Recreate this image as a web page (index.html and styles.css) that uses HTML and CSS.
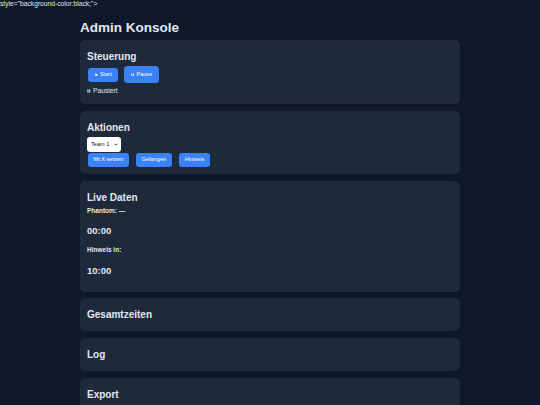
FILE: index.html
```html
<!DOCTYPE html>
<html lang="de">
<head>
<meta charset="utf-8">
<title>Admin Konsole</title>
<link rel="stylesheet" href="styles.css">
</head>
<body>
<div class="stray">style="background-color:black;"&gt;</div>
<main class="container">
  <h1 class="title">Admin Konsole</h1>

  <section class="card">
    <h2 class="card-title">Steuerung</h2>
    <div class="btn-row btn-row--controls">
      <button class="btn btn--start"><svg class="ico ico--play" viewBox="0 0 4 4"><path d="M0.3 0.2 L3.7 2 L0.3 3.8 Z" fill="#fff"/></svg>Start</button>
      <button class="btn btn--tall"><svg class="ico ico--pause" viewBox="0 0 4 4"><rect x="0.6" y="0.3" width="1" height="3.4" fill="#fff"/><rect x="2.4" y="0.3" width="1" height="3.4" fill="#fff"/></svg>Pause</button>
    </div>
    <p class="status"><svg class="ico ico--status" viewBox="0 0 4 4"><rect x="0.5" y="0.2" width="1.1" height="3.6" fill="#e2e8f0"/><rect x="2.4" y="0.2" width="1.1" height="3.6" fill="#e2e8f0"/></svg>Pausiert</p>
  </section>

  <section class="card">
    <h2 class="card-title">Aktionen</h2>
    <div class="select-wrap">
      <select class="select"><option>Team 1</option></select>
      <svg class="chevron" viewBox="0 0 6 4"><path d="M0.8 0.8 L3 3 L5.2 0.8" fill="none" stroke="#111" stroke-width="1.1"/></svg>
    </div>
    <div class="btn-row btn-row--actions">
      <button class="btn">Mr.X setzen</button>
      <button class="btn">Gefangen</button>
      <button class="btn">Hinweis</button>
    </div>
  </section>

  <section class="card">
    <h2 class="card-title">Live Daten</h2>
    <p class="live-label">Phantom: —</p>
    <p class="live-time">00:00</p>
    <p class="live-label">Hinweis in:</p>
    <p class="live-time live-time--last">10:00</p>
  </section>

  <section class="card">
    <h2 class="card-title">Gesamtzeiten</h2>
  </section>

  <section class="card">
    <h2 class="card-title">Log</h2>
  </section>

  <section class="card">
    <h2 class="card-title">Export</h2>
  </section>
</main>
</body>
</html>
```

FILE: styles.css
```css
* {
  box-sizing: border-box;
}

body {
  margin: 0;
  background: #0f172a;
  color: #e2e8f0;
  font-family: "Liberation Sans", Arial, sans-serif;
}

.stray {
  font-size: 6.7px;
  line-height: 8px;
  height: 8px;
  white-space: nowrap;
  color: #e2e8f0;
}

.container {
  width: 380px;
  margin: 0 auto;
}

.title {
  font-size: 13.5px;
  line-height: 16px;
  font-weight: 700;
  margin: 12px 0 4px;
}

.card {
  background: #1e293b;
  border-radius: 5px;
  padding: 7px;
  margin-bottom: 6.8px;
  font-size: 6.7px;
  line-height: 7.7px;
}

.card-title {
  font-size: 10px;
  line-height: 11.5px;
  font-weight: 700;
  margin: 4px 0 3.5px;
}

.btn-row {
  display: flex;
  align-items: center;
  padding-left: 1px;
}

.btn-row--controls {
  margin-top: 3px;
  height: 17px;
  gap: 6px;
}

.btn-row--actions {
  margin-top: 1px;
  gap: 7.5px;
}

.btn {
  font-family: inherit;
  font-size: 5.6px;
  line-height: 7px;
  height: 14px;
  padding: 0 5.5px;
  border: 0;
  border-radius: 3px;
  background: #3b82f6;
  color: #fff;
  display: inline-flex;
  align-items: center;
  gap: 1.8px;
}

.btn--start {
  padding: 0 6.5px;
}

.btn--tall {
  height: 17px;
  padding: 0 7px;
  border-radius: 3.5px;
}

.ico {
  display: block;
}

.ico--play {
  width: 3.6px;
  height: 3.6px;
}

.ico--pause {
  width: 3.4px;
  height: 3.6px;
}

.ico--status {
  width: 3.6px;
  height: 4px;
}

.status {
  font-size: 6.7px;
  line-height: 7.7px;
  margin: 4px 0 2.3px;
  display: flex;
  align-items: center;
  gap: 2.5px;
}

.select-wrap {
  display: flex;
  width: max-content;
  align-items: center;
  height: 15px;
  padding: 0 3px 0 4px;
  gap: 4px;
  background: #fff;
  border-radius: 3px;
}

.select {
  appearance: none;
  -webkit-appearance: none;
  border: 0;
  padding: 0;
  margin: 0;
  background: transparent;
  font-family: inherit;
  font-size: 5.6px;
  line-height: 7px;
  color: #111;
}

.chevron {
  width: 4px;
  height: 3px;
  display: block;
}

.live-label {
  font-size: 6.5px;
  line-height: 7.7px;
  font-weight: 700;
  margin: 3.5px 0 0;
}

.live-time {
  font-size: 9.5px;
  line-height: 11px;
  font-weight: 700;
  margin: 10.5px 0;
}

.live-time--last {
  margin-bottom: 9px;
}
```
